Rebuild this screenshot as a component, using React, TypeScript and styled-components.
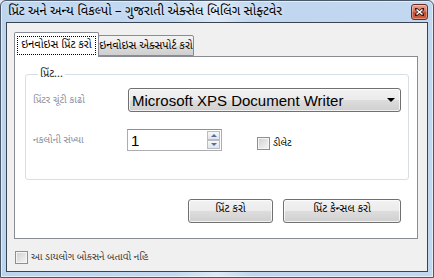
import React from 'react';
import styled, { createGlobalStyle } from 'styled-components';

const GlobalStyle = createGlobalStyle`
  html, body {
    margin: 0;
    padding: 0;
    background: #dfe8f3;
  }
  * {
    box-sizing: border-box;
  }
`;

const guj = `"Noto Sans Gujarati", "Lohit Gujarati", "Noto Sans", "DejaVu Sans", sans-serif`;

const Window = styled.div`
  width: 434px;
  height: 278px;
  border: 1px solid #4b5868;
  border-radius: 6px 6px 0 0;
  padding: 0 5px 5px 5px;
  display: flex;
  flex-direction: column;
  background: linear-gradient(to right, #bcd4ee 0%, #c3d9f1 40%, #dde9f6 50%, #c0d6ef 58%, #c2d8f0 100%);
  box-shadow: inset 0 0 0 1px rgba(255, 255, 255, 0.55);
  font-family: ${guj};
`;

const TitleBar = styled.div`
  height: 21px;
  display: flex;
  align-items: center;
  justify-content: space-between;
  padding-left: 2px;
`;

const TitleText = styled.span`
  font-size: 13px;
  color: #000;
  white-space: nowrap;
  text-shadow: 0 0 6px rgba(255, 255, 255, 0.9);
`;

const CloseButton = styled.div`
  width: 17px;
  height: 16px;
  margin-top: 1px;
  border: 1px solid #6d2b20;
  border-radius: 3px;
  background: linear-gradient(to bottom, #e8a493 0%, #d7745c 45%, #c54a2f 55%, #d0603f 100%);
  display: flex;
  align-items: center;
  justify-content: center;
  box-shadow: inset 0 0 0 1px rgba(255, 255, 255, 0.35);
`;

const Client = styled.div`
  flex: 1;
  border: 1px solid #3a4450;
  background: #f0f0f0;
  padding: 9px 9px 0 7px;
  display: flex;
  flex-direction: column;
`;

const TabStrip = styled.div`
  height: 25px;
  display: flex;
  align-items: flex-end;
  margin-bottom: -1px;
  position: relative;
  z-index: 1;
`;

const Tab = styled.div<{ $active?: boolean }>`
  height: ${p => (p.$active ? '25px' : '21px')};
  width: ${p => (p.$active ? '85px' : '96px')};
  margin-bottom: ${p => (p.$active ? '0' : '1px')};
  margin-right: -1px;
  border: 1px solid #898c95;
  border-bottom: ${p => (p.$active ? 'none' : '1px solid #898c95')};
  border-radius: 2px 2px 0 0;
  background: ${p => (p.$active ? '#fff' : 'linear-gradient(to bottom, #f2f2f2 0%, #ebebeb 50%, #dddddd 51%, #cfcfcf 100%)')};
  font-size: 11px;
  color: #000;
  display: flex;
  justify-content: center;
  padding-top: ${p => (p.$active ? '4px' : '2px')};
  white-space: nowrap;
`;

const FocusLabel = styled.span`
  outline: 1px dotted #000;
  padding: 0 3px;
  height: 17px;
  line-height: 16px;
`;

const TabLabel = styled.span`
  line-height: 16px;
`;

const Panel = styled.div`
  height: 183px;
  border: 1px solid #898c95;
  background: #fff;
  padding: 11px 8px 0 10px;
  display: flex;
  flex-direction: column;
`;

const GroupBox = styled.fieldset`
  margin: 0;
  height: 112px;
  padding: 7px 6px 0 7px;
  border: 1px solid #d5dfe5;
  border-radius: 3px;
  display: flex;
  flex-direction: column;
`;

const Legend = styled.legend`
  font-size: 11px;
  line-height: 13px;
  color: #1b1b1b;
  padding: 0 2px;
  margin-left: 5px;
`;

const FieldRow = styled.div<{ $gap?: number }>`
  display: flex;
  align-items: center;
  margin-top: ${p => p.$gap ?? 0}px;
`;

const FieldLabel = styled.span`
  width: 95px;
  font-size: 10px;
  color: #8a8f9c;
  white-space: nowrap;
`;

const Combo = styled.div`
  width: 273px;
  height: 24px;
  border: 1px solid #707070;
  border-radius: 3px;
  background: linear-gradient(to bottom, #f2f2f2 0%, #ebebeb 48%, #dddddd 52%, #cfcfcf 100%);
  box-shadow: inset 0 0 0 1px rgba(255, 255, 255, 0.7);
  display: flex;
  align-items: center;
  justify-content: space-between;
  padding: 0 5px 0 3px;
  font-family: "Liberation Sans", Arial, sans-serif;
  font-size: 15px;
  color: #000;
`;

const Arrow = styled.span`
  width: 0;
  height: 0;
  border-left: 4px solid transparent;
  border-right: 4px solid transparent;
  border-top: 4px solid #000;
`;

const Numeric = styled.div`
  margin-left: -1px;
  width: 95px;
  height: 22px;
  border: 1px solid #abadb3;
  border-top-color: #8e9097;
  background: #fff;
  display: flex;
  align-items: center;
  justify-content: space-between;
  padding: 0 1px 0 3px;
  font-family: "Liberation Sans", Arial, sans-serif;
  font-size: 15px;
  color: #000;
`;

const Spinner = styled.div`
  display: flex;
  flex-direction: column;
`;

const SpinButton = styled.div`
  width: 13px;
  height: 9px;
  border: 1px solid #b8bcc4;
  background: linear-gradient(to bottom, #f7f7f7, #e3e4e8);
  display: flex;
  align-items: center;
  justify-content: center;
`;

const SpinArrow = styled.span<{ $up?: boolean }>`
  width: 0;
  height: 0;
  border-left: 3px solid transparent;
  border-right: 3px solid transparent;
  ${p => (p.$up ? 'border-bottom: 3px solid #4f6ea8;' : 'border-top: 3px solid #4f6ea8;')}
`;

const CheckBox = styled.span`
  width: 13px;
  height: 13px;
  flex: none;
  border: 1px solid #8e8f8f;
  box-shadow: inset 0 0 0 1px #f5f5f5;
  background: linear-gradient(135deg, #cfcfcf, #f6f6f6);
`;

const CheckLabel = styled.span<{ $muted?: boolean }>`
  font-size: 10px;
  color: ${p => (p.$muted ? '#3a3a3a' : '#000')};
  margin-left: 3px;
  white-space: nowrap;
`;

const DeleteCheck = styled.div`
  display: flex;
  align-items: center;
  margin-left: 35px;
  margin-top: 6px;
`;

const ButtonRow = styled.div`
  display: flex;
  justify-content: flex-end;
  gap: 10px;
  margin-top: 19px;
  padding-right: 8px;
`;

const Button = styled.div<{ $width: number }>`
  width: ${p => p.$width}px;
  height: 24px;
  border: 1px solid #707070;
  border-radius: 3px;
  background: linear-gradient(to bottom, #f2f2f2 0%, #ebebeb 48%, #dddddd 52%, #cfcfcf 100%);
  box-shadow: inset 0 0 0 1px rgba(255, 255, 255, 0.75);
  display: flex;
  justify-content: center;
  padding-top: 2px;
  font-size: 11px;
  color: #000;
  white-space: nowrap;
`;

const BottomRow = styled.div`
  display: flex;
  align-items: center;
  height: 13px;
  margin-top: 12px;
  margin-left: 1px;
`;

const App: React.FC = () => {
  return (
    <>
      <GlobalStyle />
      <Window>
        <TitleBar>
          <TitleText>પ્રિંટ અને અન્ય વિકલ્પો – ગુજરાતી એક્સેલ બિલિંગ સોફ્ટવેર</TitleText>
          <CloseButton>
            <svg width="9" height="8" viewBox="0 0 9 8">
              <path d="M1 1 L8 7 M8 1 L1 7" stroke="#3a1a14" strokeWidth="3" strokeLinecap="square" />
              <path d="M1.5 1.5 L7.5 6.5 M7.5 1.5 L1.5 6.5" stroke="#fff" strokeWidth="1.6" />
            </svg>
          </CloseButton>
        </TitleBar>
        <Client>
          <TabStrip>
            <Tab $active>
              <FocusLabel>ઇનવોઇસ પ્રિંટ કરો</FocusLabel>
            </Tab>
            <Tab>
              <TabLabel>ઇનવોઇસ એક્સપોર્ટ કરો</TabLabel>
            </Tab>
          </TabStrip>
          <Panel>
            <GroupBox>
              <Legend>પ્રિંટ...</Legend>
              <FieldRow>
                <FieldLabel>પ્રિંટર ચૂંટી કાઢો</FieldLabel>
                <Combo>
                  <span>Microsoft XPS Document Writer</span>
                  <Arrow />
                </Combo>
              </FieldRow>
              <FieldRow $gap={17}>
                <FieldLabel>નકલોની સંખ્યા</FieldLabel>
                <Numeric>
                  <span>1</span>
                  <Spinner>
                    <SpinButton>
                      <SpinArrow $up />
                    </SpinButton>
                    <SpinButton>
                      <SpinArrow />
                    </SpinButton>
                  </Spinner>
                </Numeric>
                <DeleteCheck>
                  <CheckBox />
                  <CheckLabel>ડીલેટ</CheckLabel>
                </DeleteCheck>
              </FieldRow>
            </GroupBox>
            <ButtonRow>
              <Button $width={85}>પ્રિંટ કરો</Button>
              <Button $width={118}>પ્રિંટ કેન્સલ કરો</Button>
            </ButtonRow>
          </Panel>
          <BottomRow>
            <CheckBox />
            <CheckLabel $muted>આ ડાયલોગ બોક્સને બતાવો નહિ</CheckLabel>
          </BottomRow>
        </Client>
      </Window>
    </>
  );
};

export default App;
